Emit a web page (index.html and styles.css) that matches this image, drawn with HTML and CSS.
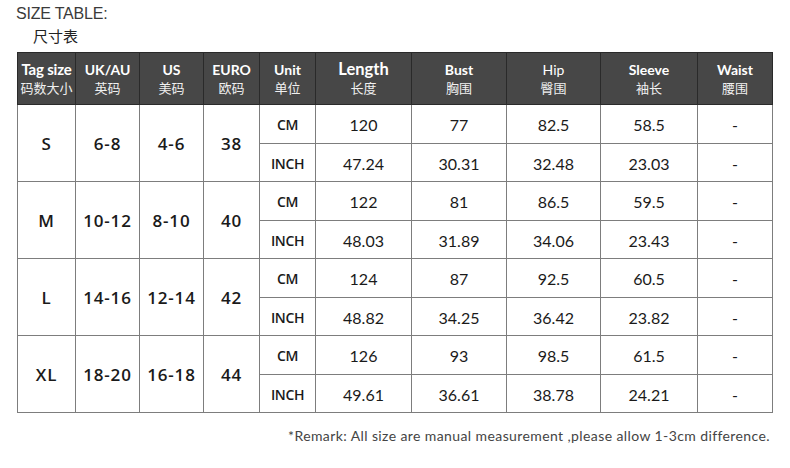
FILE: index.html
```html
<!DOCTYPE html>
<html>
<head>
<meta charset="utf-8">
<link rel="stylesheet" href="styles.css">
</head>
<body>
<div class="page">
  <div class="title">SIZE TABLE:</div>
  <div class="subtitle">尺寸表</div>
  <table class="size-table">
    <colgroup>
      <col class="c-tag"><col class="c-uk"><col class="c-us"><col class="c-euro"><col class="c-unit">
      <col class="c-len"><col class="c-bust"><col class="c-hip"><col class="c-sleeve"><col class="c-waist">
    </colgroup>
    <thead>
      <tr>
        <th><span class="en wide">Tag size</span><span class="cn">码数大小</span></th>
        <th><span class="en">UK/AU</span><span class="cn">英码</span></th>
        <th><span class="en">US</span><span class="cn">美码</span></th>
        <th><span class="en">EURO</span><span class="cn">欧码</span></th>
        <th><span class="en">Unit</span><span class="cn">单位</span></th>
        <th><span class="en big">Length</span><span class="cn">长度</span></th>
        <th><span class="en">Bust</span><span class="cn">胸围</span></th>
        <th><span class="en light">Hip</span><span class="cn">臀围</span></th>
        <th><span class="en">Sleeve</span><span class="cn">袖长</span></th>
        <th><span class="en">Waist</span><span class="cn">腰围</span></th>
      </tr>
    </thead>
    <tbody>
      <tr class="r-cm">
        <td rowspan="2" class="sz">S</td><td rowspan="2" class="sz">6-8</td><td rowspan="2" class="sz">4-6</td><td rowspan="2" class="sz">38</td>
        <td class="unit">CM</td><td>120</td><td>77</td><td>82.5</td><td>58.5</td><td>-</td>
      </tr>
      <tr class="r-in">
        <td class="unit">INCH</td><td>47.24</td><td>30.31</td><td>32.48</td><td>23.03</td><td>-</td>
      </tr>
      <tr class="r-cm">
        <td rowspan="2" class="sz">M</td><td rowspan="2" class="sz">10-12</td><td rowspan="2" class="sz">8-10</td><td rowspan="2" class="sz">40</td>
        <td class="unit">CM</td><td>122</td><td>81</td><td>86.5</td><td>59.5</td><td>-</td>
      </tr>
      <tr class="r-in">
        <td class="unit">INCH</td><td>48.03</td><td>31.89</td><td>34.06</td><td>23.43</td><td>-</td>
      </tr>
      <tr class="r-cm">
        <td rowspan="2" class="sz">L</td><td rowspan="2" class="sz">14-16</td><td rowspan="2" class="sz">12-14</td><td rowspan="2" class="sz">42</td>
        <td class="unit">CM</td><td>124</td><td>87</td><td>92.5</td><td>60.5</td><td>-</td>
      </tr>
      <tr class="r-in">
        <td class="unit">INCH</td><td>48.82</td><td>34.25</td><td>36.42</td><td>23.82</td><td>-</td>
      </tr>
      <tr class="r-cm">
        <td rowspan="2" class="sz">XL</td><td rowspan="2" class="sz">18-20</td><td rowspan="2" class="sz">16-18</td><td rowspan="2" class="sz">44</td>
        <td class="unit">CM</td><td>126</td><td>93</td><td>98.5</td><td>61.5</td><td>-</td>
      </tr>
      <tr class="r-in">
        <td class="unit">INCH</td><td>49.61</td><td>36.61</td><td>38.78</td><td>24.21</td><td>-</td>
      </tr>
    </tbody>
  </table>
  <div class="remark">*Remark: All size are manual measurement ,please allow 1-3cm difference.</div>
</div>
</body>
</html>
```
FILE: styles.css
```css
html, body {
  margin: 0;
  padding: 0;
  background: #ffffff;
}
.page {
  width: 790px;
  height: 468px;
  padding: 5px 0 0 16px;
  box-sizing: border-box;
  font-family: Lato, "Noto Sans CJK SC", sans-serif;
  color: #222;
}
.title {
  font-family: "Liberation Sans", sans-serif;
  font-size: 16px;
  font-weight: 400;
  color: #3a3a3a;
  line-height: 18px;
  letter-spacing: -0.2px;
}
.subtitle {
  font-family: "Noto Sans CJK SC", sans-serif;
  font-size: 15px;
  color: #222;
  line-height: 20px;
  padding-left: 17px;
  margin-top: 3px;
}
.size-table {
  margin-top: 6px;
  margin-left: 1px;
  border-collapse: collapse;
  table-layout: fixed;
  width: 755px;
}
.c-tag { width: 58px; }
.c-uk { width: 64px; }
.c-us { width: 64px; }
.c-euro { width: 56px; }
.c-unit { width: 56px; }
.c-len { width: 96px; }
.c-bust { width: 95px; }
.c-hip { width: 94px; }
.c-sleeve { width: 97px; }
.c-waist { width: 75px; }
.size-table th {
  background: #474747;
  color: #ffffff;
  border: 1px solid #2a2a2a;
  height: 51px;
  padding: 0;
  text-align: center;
  vertical-align: middle;
}
.size-table th .en {
  display: block;
  font-family: Lato, sans-serif;
  font-weight: 700;
  font-size: 14px;
  line-height: 17px;
}
.size-table th .en.wide {
  font-size: 15px;
  letter-spacing: -0.2px;
}
.size-table th .en.big {
  font-size: 16.5px;
  font-weight: 700;
}
.size-table th .en.light {
  font-weight: 400;
}
.size-table th .cn {
  display: block;
  font-family: "Noto Sans CJK SC", sans-serif;
  font-weight: 400;
  font-size: 13px;
  line-height: 19px;
  color: #f0f0f0;
}
.size-table td {
  border: 1px solid #7d7d7d;
  padding: 0;
  text-align: center;
  vertical-align: middle;
  font-family: Lato, sans-serif;
  font-size: 16px;
  color: #1a1a1a;
}
.size-table tr.r-cm td { height: 38px; }
.size-table tr.r-in td { height: 35px; padding-top: 2px; }
.size-table td.sz {
  font-family: "Open Sans", sans-serif;
  font-weight: 600;
  font-size: 17px;
  letter-spacing: 0.8px;
  padding-top: 0;
}
.size-table td.unit {
  font-family: "Open Sans", sans-serif;
  font-weight: 600;
  font-size: 14px;
  letter-spacing: -0.4px;
}
.remark {
  margin-top: 14px;
  width: 754px;
  text-align: right;
  font-family: Lato, sans-serif;
  font-size: 14px;
  font-weight: 400;
  color: #444;
  letter-spacing: 0.4px;
}
```
